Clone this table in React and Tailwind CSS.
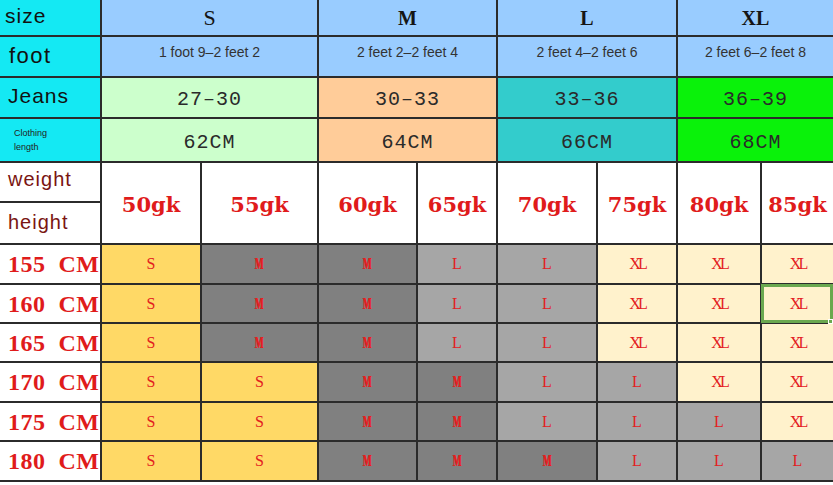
import React from "react";

const line = "border-[#2b2b2b] border-b-2";
const sizes = [
  { name: "S", foot: "1 foot 9–2 feet 2", jeans: "27–30", length: "62CM", bg: "bg-[#ccffcc]", head: "font-normal text-[22px]" },
  { name: "M", foot: "2 feet 2–2 feet 4", jeans: "30–33", length: "64CM", bg: "bg-[#ffcc99]", head: "font-bold text-[20px]" },
  { name: "L", foot: "2 feet 4–2 feet 6", jeans: "33–36", length: "66CM", bg: "bg-[#33cccc]", head: "font-bold text-[20px]" },
  { name: "XL", foot: "2 feet 6–2 feet 8", jeans: "36–39", length: "68CM", bg: "bg-[#0af20a]", head: "font-bold text-[20px]" },
];
const weights = ["50gk", "55gk", "60gk", "65gk", "70gk", "75gk", "80gk", "85gk"];

// y = yellow, d = dark gray, g = light gray, c = cream
const cellBg = {
  y: "bg-[#ffd966]",
  d: "bg-[#808080]",
  g: "bg-[#a6a6a6]",
  c: "bg-[#fff2cc]",
};
const rows = [
  { h: "155", cells: [["S", "y"], ["M", "d"], ["M", "d"], ["L", "g"], ["L", "g"], ["XL", "c"], ["XL", "c"], ["XL", "c"]] },
  { h: "160", cells: [["S", "y"], ["M", "d"], ["M", "d"], ["L", "g"], ["L", "g"], ["XL", "c"], ["XL", "c"], ["XL", "c"]] },
  { h: "165", cells: [["S", "y"], ["M", "d"], ["M", "d"], ["L", "g"], ["L", "g"], ["XL", "c"], ["XL", "c"], ["XL", "c"]] },
  { h: "170", cells: [["S", "y"], ["S", "y"], ["M", "d"], ["M", "d"], ["L", "g"], ["L", "g"], ["XL", "c"], ["XL", "c"]] },
  { h: "175", cells: [["S", "y"], ["S", "y"], ["M", "d"], ["M", "d"], ["L", "g"], ["L", "g"], ["L", "g"], ["XL", "c"]] },
  { h: "180", cells: [["S", "y"], ["S", "y"], ["M", "d"], ["M", "d"], ["M", "d"], ["L", "g"], ["L", "g"], ["L", "g"]] },
];

const SizeMark = ({ v }) => {
  if (v === "M")
    return (
      <span className="inline-block scale-x-[0.55] font-bold text-[17px] text-[#e3201f] [text-shadow:0.6px_0_0_#e3201f]">
        M
      </span>
    );
  return (
    <span className={`text-[16px] text-[#e3201f] ${v === "XL" ? "tracking-[-3px]" : ""}`}>{v}</span>
  );
};

const App = () => {
  return (
    <div className="w-[833px] h-[485px] bg-white overflow-hidden">
      <div className="grid grid-cols-[102px_100px_117px_99px_80px_100px_80px_84px_71px] grid-rows-[37px_41px_41px_44px_40px_42px_40px_39px_39px_40px_39px_40px] font-['Liberation_Serif',serif]">
        {/* size row */}
        <div className={`bg-[#14e9f3] border-r-2 ${line} flex items-center pl-[5px] pb-[4px] font-['Liberation_Sans',sans-serif] text-[21px] tracking-[1px] text-[#111]`}>
          size
        </div>
        {sizes.map((s, i) => (
          <div
            key={s.name}
            className={`col-span-2 bg-[#99ccff] ${line} ${i < 3 ? "border-r-2" : ""} flex items-center justify-center text-[#151515] ${s.head}`}
          >
            {s.name}
          </div>
        ))}

        {/* foot row */}
        <div className={`bg-[#14e9f3] border-r-2 ${line} flex items-center pl-[9px] pb-[2px] font-['Liberation_Sans',sans-serif] text-[22px] tracking-[1.5px] text-[#111]`}>
          foot
        </div>
        {sizes.map((s, i) => (
          <div
            key={s.name}
            className={`col-span-2 bg-[#99ccff] ${line} ${i < 3 ? "border-r-2" : ""} flex items-center justify-center pb-[9px] font-['Liberation_Sans',sans-serif] text-[14px] text-[#333]`}
          >
            {s.foot}
          </div>
        ))}

        {/* jeans row */}
        <div className={`bg-[#14e9f3] border-r-2 ${line} flex items-center pl-[8px] pb-[4px] font-['Liberation_Sans',sans-serif] text-[21px] tracking-[1px] text-[#111]`}>
          Jeans
        </div>
        {sizes.map((s, i) => (
          <div
            key={s.name}
            className={`col-span-2 ${s.bg} ${line} ${i < 3 ? "border-r-2" : ""} flex items-center justify-center pt-[4px] font-['Liberation_Mono',monospace] text-[20px] tracking-[1px] text-[#2a2a2a]`}
          >
            {s.jeans}
          </div>
        ))}

        {/* clothing length row */}
        <div className={`bg-[#14e9f3] border-r-2 ${line} flex flex-col justify-center pl-[14px] font-['Liberation_Sans',sans-serif] text-[9px] leading-[14px] text-[#222]`}>
          <span>Clothing</span>
          <span>length</span>
        </div>
        {sizes.map((s, i) => (
          <div
            key={s.name}
            className={`col-span-2 ${s.bg} ${line} ${i < 3 ? "border-r-2" : ""} flex items-center justify-center pt-[5px] font-['Liberation_Mono',monospace] text-[20px] tracking-[1px] text-[#2a2a2a]`}
          >
            {s.length}
          </div>
        ))}

        {/* weight / height */}
        <div className={`bg-white border-r-2 ${line} flex items-center pl-[8px] pb-[6px] font-['Liberation_Sans',sans-serif] text-[20px] tracking-[1px] text-[#7a1512]`}>
          weight
        </div>
        {weights.map((w, i) => (
          <div
            key={w}
            className={`row-span-2 bg-white ${line} ${i < 7 ? "border-r-2" : ""} flex items-center justify-center pt-[4px] font-['DejaVu_Serif',serif] font-bold text-[21px] text-[#e01b1b]`}
          >
            {w}
          </div>
        ))}
        <div className={`bg-white border-r-2 ${line} flex items-center pl-[8px] pb-[2px] font-['Liberation_Sans',sans-serif] text-[20px] tracking-[1px] text-[#7a1512]`}>
          height
        </div>

        {/* body */}
        {rows.map((r, ri) => (
          <React.Fragment key={r.h}>
            <div className={`bg-white border-r-2 ${line} flex items-center pl-[8px] font-bold text-[24px] text-[#e01b1b] whitespace-pre tracking-[0.5px]`}>
              {r.h + "  CM"}
            </div>
            {r.cells.map(([v, c], ci) => (
              <div
                key={ci}
                className={`relative ${cellBg[c]} ${line} ${ci < 7 ? "border-r-2" : ""} flex items-center justify-center`}
              >
                <SizeMark v={v} />
                {ri === 1 && ci === 7 && (
                  <div className="absolute -left-[1px] -top-[1px] right-0 -bottom-[1px] border-[3px] border-[#6aa84f]">
                    <div className="absolute -right-[3px] -bottom-[4px] w-[5px] h-[5px] bg-[#6aa84f] border border-white" />
                  </div>
                )}
              </div>
            ))}
          </React.Fragment>
        ))}
      </div>
    </div>
  );
};

export default App;
